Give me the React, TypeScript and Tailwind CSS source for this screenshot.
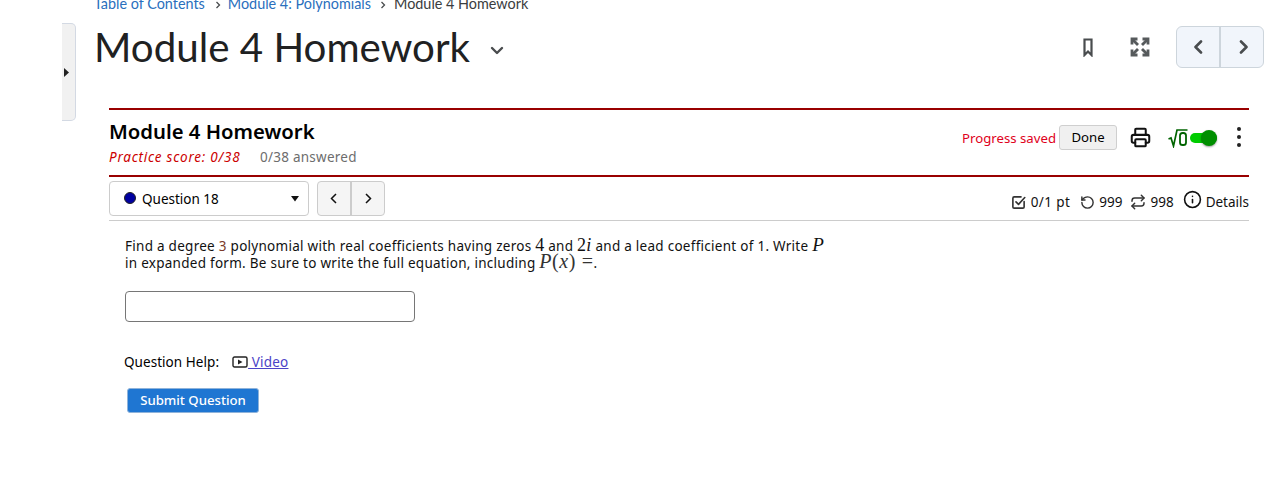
import React from "react";
import { Printer, RotateCcw, Repeat, Info } from "lucide-react";

const ui = { fontFamily: '"Noto Sans", "Open Sans", sans-serif' };
const lato = { fontFamily: 'Lato, "Noto Sans", sans-serif' };
const math = { fontFamily: '"Liberation Serif", serif' };

export default function App() {
  return (
    <div className="relative w-[1267px] h-[489px] overflow-hidden bg-white text-[#000]" style={ui}>
      {/* side tab */}
      <div className="absolute left-[62px] top-[23px] w-[14px] h-[98px] rounded-r-[5px] border border-l-0 border-[#d3d9e3] bg-[#f1f1f1] flex items-center">
        <svg width="5" height="9" viewBox="0 0 5 9" className="ml-[2px]"><path d="M0 0L5 4.5L0 9Z" fill="#222" /></svg>
      </div>

      {/* breadcrumb */}
      <div className="h-[12px] pl-[94px] overflow-hidden" style={lato}>
        <div className="flex items-center text-[14.4px] leading-[18px] -mt-[5px] text-[#3a3d40]">
          <span className="text-[#2a6fbd]">Table of Contents</span>
          <svg width="6" height="8" viewBox="0 0 6 8" fill="none" className="ml-[10px] mr-[7px] mt-[2px]"><path d="M1.5 1L4.5 4L1.5 7" stroke="#494c4e" strokeWidth="1.3" /></svg>
          <span className="text-[#2a6fbd]">Module 4: Polynomials</span>
          <svg width="6" height="8" viewBox="0 0 6 8" fill="none" className="ml-[9px] mr-[8px] mt-[2px]"><path d="M1.5 1L4.5 4L1.5 7" stroke="#494c4e" strokeWidth="1.3" /></svg>
          <span>Module 4 Homework</span>
        </div>
      </div>

      {/* title bar */}
      <div className="flex items-center h-[56px] pl-[94px] pr-[3px] mt-[7px]">
        <h1 className="text-[40.3px] leading-[56px] font-normal text-[#202122]" style={lato}>Module 4 Homework</h1>
        <svg width="14" height="9" viewBox="0 0 14 9" fill="none" className="ml-[20px] mt-[6px]"><path d="M2 2L7 7L12 2" stroke="#494c4e" strokeWidth="2.4" strokeLinecap="round" strokeLinejoin="round" /></svg>
        <div className="ml-auto flex items-center">
          <svg width="10" height="19" viewBox="0 0 10 19" fill="none" className="mr-[37px]"><path d="M1.5 1.5H8.5V17L5 13.5L1.5 17Z" stroke="#494c4e" strokeWidth="2.2" strokeLinejoin="miter" /></svg>
          <svg width="20" height="20" viewBox="0 0 20 20" className="mr-[26px]" fill="none" stroke="#565a5c" strokeWidth="2.8">
            <path d="M2 7.5V2H7.5" /><path d="M2 2L8 8" />
            <path d="M18 7.5V2H12.5" /><path d="M18 2L12 8" />
            <path d="M2 12.5V18H7.5" /><path d="M2 18L8 12" />
            <path d="M18 12.5V18H12.5" /><path d="M18 18L12 12" />
          </svg>
          <div className="flex h-[42px] w-[88px] rounded-[6px] border border-[#cdd5dc] bg-[#f1f5fb]">
            <div className="w-[44px] flex items-center justify-center border-r-2 border-[#cdd5dc]">
              <svg width="10" height="14" viewBox="0 0 10 14" fill="none"><path d="M8 1.5L2.5 7L8 12.5" stroke="#494c4e" strokeWidth="2.6" strokeLinecap="round" strokeLinejoin="round" /></svg>
            </div>
            <div className="flex-1 flex items-center justify-center pl-[3px]">
              <svg width="10" height="14" viewBox="0 0 10 14" fill="none"><path d="M2 1.5L7.5 7L2 12.5" stroke="#494c4e" strokeWidth="2.6" strokeLinecap="round" strokeLinejoin="round" /></svg>
            </div>
          </div>
        </div>
      </div>

      {/* assessment */}
      <div className="ml-[109px] w-[1140px] mt-[33px]">
        <div className="h-[2px] bg-[#990000]" />
        <div className="flex justify-between h-[65px]">
          <div>
            <div className="text-[20.3px] leading-[28px] font-semibold mt-[7px]">Module 4 Homework</div>
            <div className="flex text-[13.5px] leading-[18px] mt-[3px]">
              <span className="italic text-[#cc0000] w-[151px] tracking-[0.75px]">Practice score: 0/38</span>
              <span className="text-[#6d6d6d] tracking-[0.25px]">0/38 answered</span>
            </div>
          </div>
          <div className="flex items-center h-[54px] pt-[1px] text-[13.2px]">
            <span className="text-[#e00020] mr-[3px] mt-[2px]">Progress saved</span>
            <span className="flex items-center justify-center w-[58px] h-[25px] rounded-[3px] border border-[#cfcfcf] bg-[#f0f0f0]">Done</span>
            <Printer size={21} strokeWidth={2.3} color="#111" className="ml-[13px]" />
            <svg width="20" height="20" viewBox="0 0 20 20" fill="none" className="ml-[17px]">
              <path d="M0.5 11L3 10L5.5 18L9 2H19.5" stroke="#006400" strokeWidth="1.7" />
              <rect x="12" y="5" width="6" height="12" rx="2.6" stroke="#006400" strokeWidth="1.8" />
            </svg>
            <span className="relative ml-[2px] w-[27px] h-[10px] rounded-full bg-[#00cc00]">
              <span className="absolute right-0 top-[-3px] w-[16px] h-[16px] rounded-full bg-[#008f00] shadow-[0_1px_2px_rgba(0,0,0,0.4)]" />
            </span>
            <span className="ml-[20px] flex flex-col gap-[4px] mr-[8px] -mt-[1px]">
              <span className="w-[4px] h-[4px] rounded-full bg-[#222]" />
              <span className="w-[4px] h-[4px] rounded-full bg-[#222]" />
              <span className="w-[4px] h-[4px] rounded-full bg-[#222]" />
            </span>
          </div>
        </div>
        <div className="h-[2px] bg-[#990000]" />

        {/* question row */}
        <div className="flex items-start h-[44px] border-b border-[#cccccc] pt-[4px]">
          <div className="flex items-center w-[200px] h-[35px] rounded-[4px] border border-[#cccccc] pl-[14px] pr-[9px] text-[13.5px]">
            <span className="w-[12px] h-[12px] rounded-full bg-[#0000a0] border border-[#222] mr-[6px] -mt-[2px]" />
            <span className="mt-[1px]">Question 18</span>
            <svg width="8" height="6" viewBox="0 0 8 6" className="ml-auto"><path d="M0 0H8L4 5.5Z" fill="#111" /></svg>
          </div>
          <div className="flex ml-[8px] w-[68px] h-[35px] rounded-[4px] border border-[#cccccc] bg-[#f5f5f5]">
            <div className="flex-1 flex items-center justify-center border-r-2 border-[#cccccc]">
              <svg width="8" height="11" viewBox="0 0 8 11" fill="none"><path d="M6 1L1.5 5.5L6 10" stroke="#111" strokeWidth="1.5" /></svg>
            </div>
            <div className="flex-1 flex items-center justify-center">
              <svg width="8" height="11" viewBox="0 0 8 11" fill="none"><path d="M2 1L6.5 5.5L2 10" stroke="#111" strokeWidth="1.5" /></svg>
            </div>
          </div>
          <div className="ml-auto flex items-center h-[38px] text-[13.5px] text-[#111] pt-[4px]">
            <svg width="15" height="15" viewBox="0 0 24 24" fill="none" stroke="#333" strokeWidth="2.6" strokeLinecap="round" strokeLinejoin="round" className="mr-[5px]">
              <path d="M21 10.5V19a2 2 0 0 1-2 2H5a2 2 0 0 1-2-2V5a2 2 0 0 1 2-2h11" /><path d="m8 11 4 4 10-11" />
            </svg>
            <span className="tracking-[0.4px]">0/1 pt</span>
            <RotateCcw size={15} strokeWidth={2.3} color="#333" className="ml-[10px] mr-[4px]" />
            <span>999</span>
            <Repeat size={16} strokeWidth={2.2} color="#333" className="ml-[8px] mr-[4px]" />
            <span>998</span>
            <Info size={19} strokeWidth={2} color="#111" className="ml-[9px] mr-[4px] -mt-[5px]" />
            <span>Details</span>
          </div>
        </div>

        {/* question body */}
        <div className="pl-[16px] pt-[17px]">
          <div className="w-[720px] text-[13.5px] leading-[17px] tracking-[0.27px] text-[#111]">
            <div className="whitespace-nowrap">
              Find a degree <span className="text-[#7a3a2a]">3</span> polynomial with real coefficients having zeros <span className="text-[18px] leading-[0]" style={math}>4</span> and <span className="text-[18px] leading-[0]" style={math}>2<i>i</i></span> and a lead coefficient of 1. Write <i className="text-[19px] leading-[0]" style={math}>P</i>
            </div>
            <div className="whitespace-nowrap">
              in expanded form. Be sure to write the full equation, including <span className="text-[20px] leading-[0] text-[#333] tracking-[0.6px]" style={math}><i>P</i>(<i>x</i>) =</span>.
            </div>
          </div>
          <div className="mt-[19px] w-[290px] h-[31px] rounded-[4px] border border-[#767676] bg-white" />
          <div className="mt-[30px] flex items-center h-[20px] text-[13.5px] -ml-[1px]">
            <span className="tracking-[0.05px]">Question Help:</span>
            <svg width="16" height="12" viewBox="0 0 16 12" fill="none" className="ml-[13px]"><rect x="1" y="1" width="14" height="10" rx="1.5" stroke="#222" strokeWidth="1.4" /><path d="M6 3.5L10.5 6L6 8.5Z" fill="#222" /></svg>
            <a href="#" className="text-[#4b43c7] underline whitespace-pre tracking-[0.2px]"> Video</a>
          </div>
          <button className="block mt-[16px] ml-[2px] w-[132px] h-[25px] rounded-[3px] border border-[#8fb3da] bg-[#1f76d2] text-white text-[13.2px] font-medium">Submit Question</button>
        </div>
      </div>
    </div>
  );
}
